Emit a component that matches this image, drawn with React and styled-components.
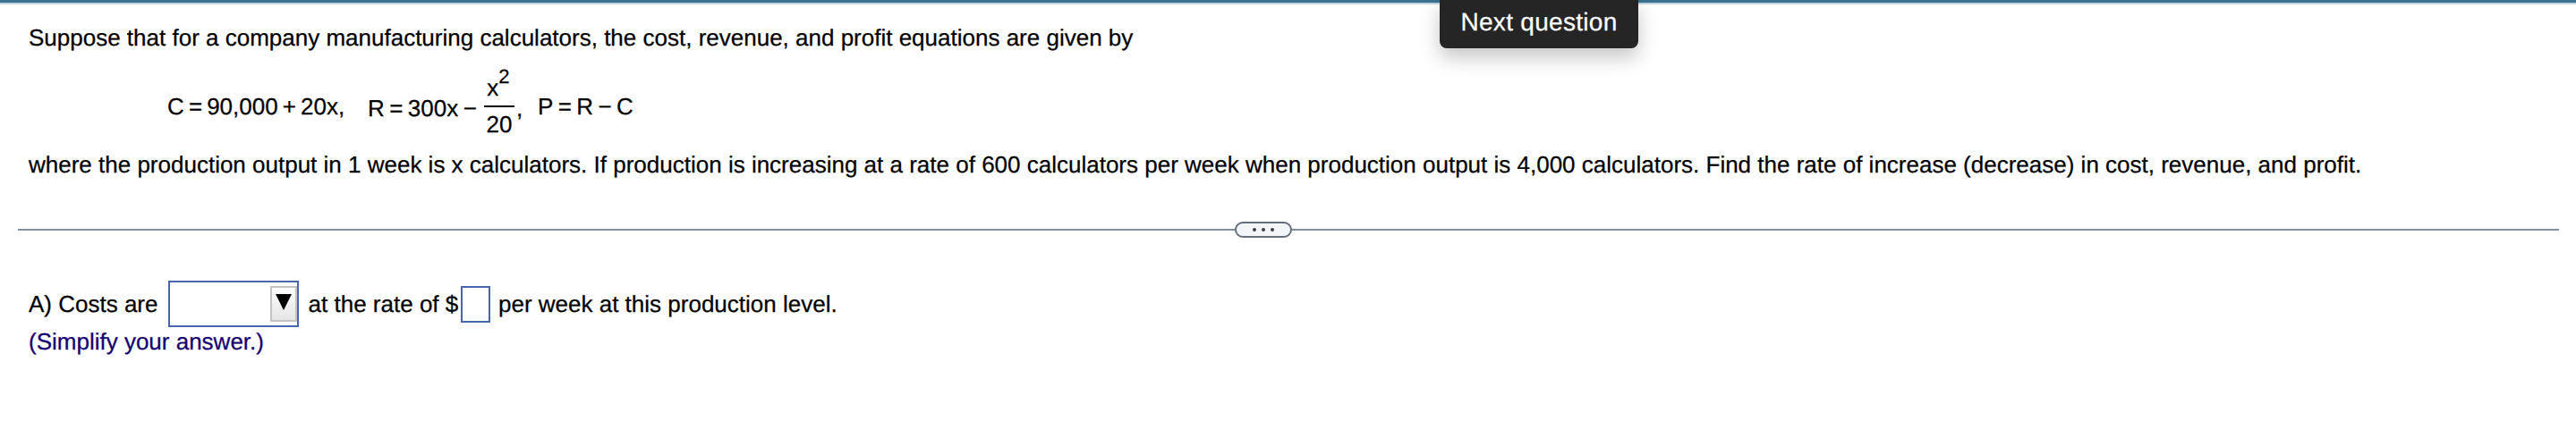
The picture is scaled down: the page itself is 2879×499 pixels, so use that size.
import React from 'react';
import styled, { createGlobalStyle } from 'styled-components';

const GlobalStyle = createGlobalStyle`
  body {
    margin: 0;
    background: #fff;
    color: #000;
    font-family: "Liberation Sans", Arial, sans-serif;
    font-size: 26px;
    line-height: 40px;
    text-rendering: geometricPrecision;
    -webkit-text-stroke: 0.25px currentColor;
  }
`;

const Page = styled.main`
  position: relative;
  box-sizing: border-box;
  height: 499px;
  overflow: hidden;
`;

const TopBar = styled.div`
  height: 3px;
  background: #3b7291;
  border-bottom: 2px solid #c3d7e1;
`;

const Tooltip = styled.div`
  position: absolute;
  top: 0;
  left: 1609px;
  box-sizing: border-box;
  width: 222px;
  height: 54px;
  padding-top: 5px;
  border-radius: 0 0 8px 8px;
  background: #252525;
  color: #fff;
  font-size: 28px;
  letter-spacing: 0.3px;
  text-align: center;
  white-space: nowrap;
  box-shadow: 0 10px 22px rgba(0, 0, 0, 0.23);
`;

const Problem = styled.section`
  padding: 17px 0 0 32px;
`;

const Line = styled.p`
  margin: 0;
  height: 40px;
  white-space: nowrap;
`;

const Equations = styled.div`
  display: flex;
  align-items: flex-start;
  height: 102px;
  padding-left: 155px;
`;

const Equation = styled.div`
  display: flex;
  gap: ${(p) => p.$gap || 5.4}px;
  height: 40px;
  margin-top: ${(p) => p.$top}px;
  margin-left: ${(p) => p.$left || 0}px;
`;

const Fraction = styled.div`
  display: flex;
  flex-direction: column;
  width: 34px;
  margin: 16px 0 0 8.1px;
`;

const Numerator = styled.div`
  display: flex;
  height: 40px;
  padding-left: 3.3px;
`;

const Exponent = styled.span`
  margin-top: -12px;
  font-size: 22px;
`;

const Denominator = styled.div`
  height: 40px;
  border-top: 2px solid #000;
  line-height: 38px;
  text-align: center;
`;

const Divider = styled.div`
  display: flex;
  align-items: center;
  height: 18px;
  margin: 44px 19px 0 20px;
`;

const Rule = styled.div`
  height: 2px;
  width: ${(p) => p.$width || 'auto'};
  flex: ${(p) => (p.$width ? 'none' : 1)};
  background: #858e9c;
`;

const Pill = styled.button`
  display: flex;
  align-items: center;
  justify-content: center;
  gap: 6px;
  box-sizing: border-box;
  width: 64px;
  height: 18px;
  padding: 0;
  border: 2px solid #646e7a;
  border-radius: 9px;
  background: #f3f5f9;
`;

const Dot = styled.span`
  width: 4px;
  height: 4px;
  border-radius: 50%;
  background: #3f4248;
`;

const AnswerRow = styled.div`
  display: flex;
  align-items: flex-start;
  height: 52px;
  margin-top: 48px;
  padding-left: 32px;
`;

const AnswerText = styled.span`
  margin-top: 6px;
  margin-left: ${(p) => p.$left || 0}px;
  width: ${(p) => (p.$width ? p.$width + 'px' : 'auto')};
  white-space: nowrap;
`;

const Select = styled.div`
  display: flex;
  justify-content: flex-end;
  box-sizing: border-box;
  width: 146px;
  height: 52px;
  padding-top: 4px;
  border: 2px solid #4767b0;
`;

const SelectButton = styled.button`
  display: flex;
  justify-content: center;
  align-items: flex-start;
  box-sizing: border-box;
  width: 30px;
  height: 40px;
  padding: 7px 0 0;
  border: 2px solid #c4c4c4;
  background: linear-gradient(#fbfbfb, #e6e6e6);
`;

const AnswerBox = styled.input`
  box-sizing: border-box;
  width: 33px;
  height: 41px;
  margin: 6px 0 0;
  padding: 0;
  border: 2px solid #4767b0;
  border-radius: 0;
  background: #fff;
`;

const Hint = styled.p`
  margin: -4px 0 0 32px;
  color: #14006e;
`;

export default function App() {
  return (
    <Page>
      <GlobalStyle />
      <TopBar />
      <Tooltip>Next question</Tooltip>
      <Problem>
        <Line>
          Suppose that for a company manufacturing calculators, the cost, revenue, and profit equations are given by
        </Line>
        <Equations>
          <Equation $top={37} $gap={5.1}>
            <span>C</span><span>=</span><span>90,000</span><span>+</span><span>20x,</span>
          </Equation>
          <Equation $top={39} $left={25.9}>
            <span>R</span><span>=</span><span>300x</span><span>−</span>
          </Equation>
          <Fraction>
            <Numerator>x<Exponent>2</Exponent></Numerator>
            <Denominator>20</Denominator>
          </Fraction>
          <Equation $top={39} $left={2}>,</Equation>
          <Equation $top={37} $left={16.8}>
            <span>P</span><span>=</span><span>R</span><span>−</span><span>C</span>
          </Equation>
        </Equations>
        <Line>
          where the production output in 1 week is x calculators. If production is increasing at a rate of 600 calculators per week when production output is 4,000 calculators. Find the rate of increase (decrease) in cost, revenue, and profit.
        </Line>
      </Problem>
      <Divider>
        <Rule $width="1360px" />
        <Pill aria-label="Resize panels"><Dot /><Dot /><Dot /></Pill>
        <Rule />
      </Divider>
      <AnswerRow>
        <AnswerText $width={156}>A) Costs are</AnswerText>
        <Select>
          <SelectButton aria-label="Choose">
            <svg width="18" height="18" viewBox="0 0 18 18"><path d="M0 0H18L9 18Z" fill="#000" /></svg>
          </SelectButton>
        </Select>
        <AnswerText $left={10.6} $width={170.4}>at the rate of $</AnswerText>
        <AnswerBox aria-label="Rate" />
        <AnswerText $left={9}>per week at this production level.</AnswerText>
      </AnswerRow>
      <Hint>(Simplify your answer.)</Hint>
    </Page>
  );
}
